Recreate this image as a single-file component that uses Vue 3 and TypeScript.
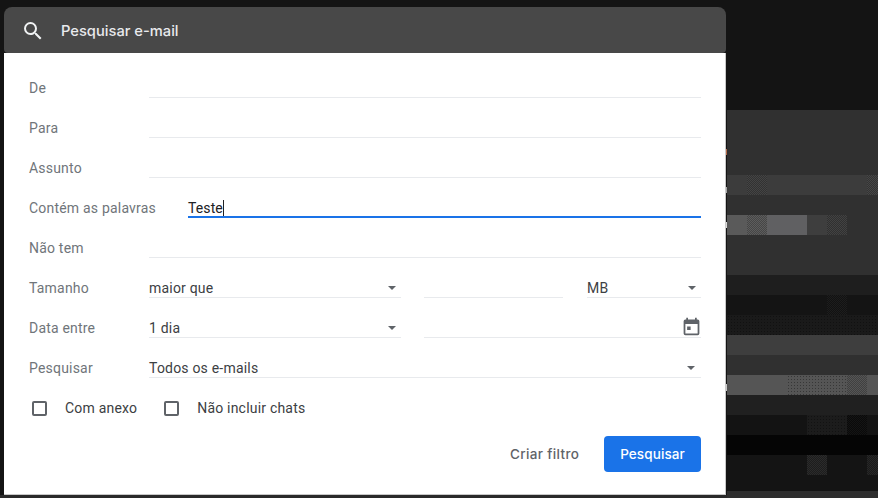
<script setup lang="ts">
interface Cell { w: number; c: string; d?: string }
interface Band { h: number; c: string; cells?: Cell[] }

const bands: Band[] = [
  { h: 110, c: '#141414' },
  { h: 65, c: '#303030' },
  { h: 20, c: '#3c3c3c', cells: [{ w: 20, c: '#3c3c3c' }, { w: 20, c: '#3e3e3e', d: 'fine' }, { w: 100, c: '#3c3c3c' }, { w: 11, c: '#404040', d: 'fine' }] },
  { h: 20, c: '#303030' },
  { h: 20, c: '#303030', cells: [{ w: 20, c: '#5a5a5a' }, { w: 20, c: '#585858', d: 'fine' }, { w: 40, c: '#606062' }, { w: 20, c: '#3e3e3e' }, { w: 20, c: '#3c3c3c', d: 'fine' }] },
  { h: 40, c: '#303030' },
  { h: 20, c: '#1e1e1e' },
  { h: 20, c: '#141414', cells: [{ w: 100, c: '#141414' }, { w: 20, c: '#161616', d: 'fine' }] },
  { h: 20, c: '#1a1a1a', cells: [{ w: 151, c: '#1a1a1a', d: 'dots' }] },
  { h: 20, c: '#3e3e3e' },
  { h: 20, c: '#303030' },
  { h: 20, c: '#555555', cells: [{ w: 60, c: '#555555' }, { w: 60, c: '#555555', d: 'dots' }, { w: 20, c: '#505050', d: 'fine' }] },
  { h: 20, c: '#202020' },
  { h: 20, c: '#131313', cells: [{ w: 80, c: '#131313' }, { w: 40, c: '#1c1c1c', d: 'dots' }, { w: 20, c: '#0c0c0c', d: 'fine' }] },
  { h: 20, c: '#050505' },
  { h: 20, c: '#141414', cells: [{ w: 80, c: '#141414' }, { w: 20, c: '#242424', d: 'fine' }, { w: 40, c: '#141414' }, { w: 11, c: '#202020', d: 'fine' }] },
  { h: 16, c: '#141414' },
  { h: 7, c: '#2e2e2e' },
]

const marks = [
  { y: 149, h: 6, c: '#b56a48' },
  { y: 187, h: 6, c: '#a8a8a8' },
  { y: 222, h: 6, c: '#d8d8d8' },
  { y: 384, h: 7, c: '#c8c8c8' },
]
</script>

<template>
  <div class="screen">
    <div class="backdrop">
      <div v-for="(b, i) in bands" :key="i" class="band" :style="{ height: b.h + 'px', background: b.c }">
        <div
          v-for="(cell, j) in b.cells ?? []"
          :key="j"
          class="cell"
          :class="cell.d"
          :style="{ width: cell.w + 'px', backgroundColor: cell.c }"
        ></div>
      </div>
    </div>
    <i v-for="m in marks" :key="m.y" class="mark" :style="{ top: m.y + 'px', height: m.h + 'px', background: m.c }"></i>

    <div class="dialog">
      <header class="search">
        <svg class="search-icon" viewBox="0 0 24 24" width="24" height="24">
          <path d="M15.5 14h-.79l-.28-.27A6.47 6.47 0 0 0 16 9.5 6.5 6.5 0 1 0 9.5 16c1.61 0 3.09-.59 4.23-1.57l.27.28v.79l5 4.99L20.49 19l-4.99-5zm-6 0C7.01 14 5 11.99 5 9.5S7.01 5 9.5 5 14 7.01 14 9.5 11.99 14 9.5 14z" />
        </svg>
        <span class="search-text">Pesquisar e-mail</span>
      </header>

      <form class="panel" @submit.prevent>
        <div class="row"><label>De</label><div class="field"></div></div>
        <div class="row"><label>Para</label><div class="field"></div></div>
        <div class="row"><label>Assunto</label><div class="field"></div></div>
        <div class="row">
          <label class="wide">Contém as palavras</label>
          <div class="field active"><span class="value">Teste</span><span class="caret"></span></div>
        </div>
        <div class="row"><label>Não tem</label><div class="field"></div></div>
        <div class="row">
          <label>Tamanho</label>
          <div class="field select first"><span class="value">maior que</span><i class="arrow"></i></div>
          <div class="field mid"></div>
          <div class="field select unit"><span class="value">MB</span><i class="arrow"></i></div>
        </div>
        <div class="row">
          <label>Data entre</label>
          <div class="field select first"><span class="value">1 dia</span><i class="arrow"></i></div>
          <div class="field date">
            <svg viewBox="0 0 24 24" width="21" height="21" class="cal">
              <path d="M19 4h-1V2h-2v2H8V2H6v2H5a2 2 0 0 0-2 2v14a2 2 0 0 0 2 2h14a2 2 0 0 0 2-2V6a2 2 0 0 0-2-2zm0 16H5V9h14v11z" />
              <rect x="7" y="12" width="4" height="4" />
            </svg>
          </div>
        </div>
        <div class="row">
          <label>Pesquisar</label>
          <div class="field select wide-select"><span class="value">Todos os e-mails</span><i class="arrow"></i></div>
        </div>
        <div class="checks">
          <span class="check first-check"><i class="box"></i>Com anexo</span>
          <span class="check"><i class="box"></i>Não incluir chats</span>
        </div>
        <div class="actions">
          <button type="button" class="link">Criar filtro</button>
          <button type="button" class="primary">Pesquisar</button>
        </div>
      </form>
    </div>
  </div>
</template>

<style>
html, body { margin: 0; background: #141414; }
</style>

<style scoped>
.screen {
  position: relative;
  width: 878px;
  height: 498px;
  overflow: hidden;
  background: linear-gradient(#141414 495px, #2a2a2a 495px);
  font-family: Roboto, "Liberation Sans", sans-serif;
}
.backdrop {
  position: absolute;
  top: 0;
  left: 727px;
  right: 0;
  display: flex;
  flex-direction: column;
}
.band { display: flex; }
.cell { height: 100%; flex: none; }
.cell.fine {
  background-image: repeating-conic-gradient(rgba(0,0,0,.2) 0 25%, rgba(255,255,255,.03) 0 50%);
  background-size: 2px 2px;
}
.cell.dots {
  background-image: radial-gradient(rgba(0,0,0,.35) 0.7px, transparent 0.8px);
  background-size: 3px 3px;
}
.mark { position: absolute; left: 725px; width: 2px; }

.dialog {
  position: absolute;
  top: 7px;
  left: 4px;
  width: 722px;
  display: flex;
  flex-direction: column;
}
.search {
  height: 46px;
  box-sizing: border-box;
  padding-top: 2px;
  display: flex;
  align-items: center;
  background: #484848;
  border-radius: 8px 8px 4px 4px;
  color: #f1f3f4;
}
.search-icon { fill: #f1f3f4; margin-left: 17px; flex: none; }
.search-text {
  margin-left: 16px;
  font-family: Inter, Roboto, sans-serif;
  font-size: 14.7px;
  font-weight: 500;
  color: #e8eaed;
}
.panel {
  height: 442px;
  box-sizing: border-box;
  padding: 5px 24px 0 25px;
  background: #fff;
  border-right: 1px solid #c8c8c8;
  border-bottom: 1px solid #c8c8c8;
  display: flex;
  flex-direction: column;
  width: 722px;
}
.row {
  height: 40px;
  display: flex;
  align-items: stretch;
  font-size: 14px;
  letter-spacing: 0.2px;
}
label {
  width: 120px;
  flex: none;
  color: #70757a;
  padding-top: 21px;
  line-height: 18px;
}
label.wide { width: 159px; }
.field {
  flex: 1;
  min-width: 0;
  position: relative;
  display: flex;
  align-items: flex-start;
  padding-top: 21px;
  box-sizing: border-box;
  line-height: 18px;
  color: #3c4043;
  border-bottom: 1px solid #e8eaed;
}
.field.active { border-bottom: 2px solid #1a73e8; color: #202124; letter-spacing: 0.1px; }
.caret {
  width: 1px;
  height: 16px;
  background: #202124;
  margin-top: 1px;
}
.field.first { flex: none; width: 252px; margin-right: 23px; }
.field.mid { flex: none; width: 139px; margin-right: 24px; }
.field.unit { flex: none; width: 114px; }
.field.date { flex: 1; }
.arrow {
  position: absolute;
  right: 5px;
  top: 28px;
  width: 0;
  height: 0;
  border-left: 4.5px solid transparent;
  border-right: 4.5px solid transparent;
  border-top: 4.5px solid #5f6368;
}
.wide-select .arrow { right: 6px; }
.cal {
  position: absolute;
  right: -1px;
  top: 18px;
  fill: #5f6368;
}
.checks {
  height: 40px;
  display: flex;
  align-items: center;
  font-size: 14px;
  letter-spacing: 0.2px;
  color: #3c4043;
  padding-left: 3px;
  margin-top: 10px;
}
.check { display: flex; align-items: center; white-space: nowrap; }
.first-check { margin-right: 27px; }
.box {
  width: 11px;
  height: 11px;
  border: 2px solid #5f6368;
  border-radius: 2px;
  margin-right: 18px;
  flex: none;
}
.actions {
  display: flex;
  justify-content: flex-end;
  align-items: center;
  margin-top: 8px;
}
button {
  font-family: Inter, Roboto, sans-serif;
  font-size: 13.5px;
  font-weight: 500;
  border: none;
  height: 36px;
  border-radius: 4px;
  padding: 0;
  letter-spacing: 0.1px;
  white-space: nowrap;
}
.link { background: none; color: #5f6368; margin-right: 25px; width: 69px; letter-spacing: 0.35px; }
.primary { background: #1a73e8; color: #fff; width: 97px; }
</style>
